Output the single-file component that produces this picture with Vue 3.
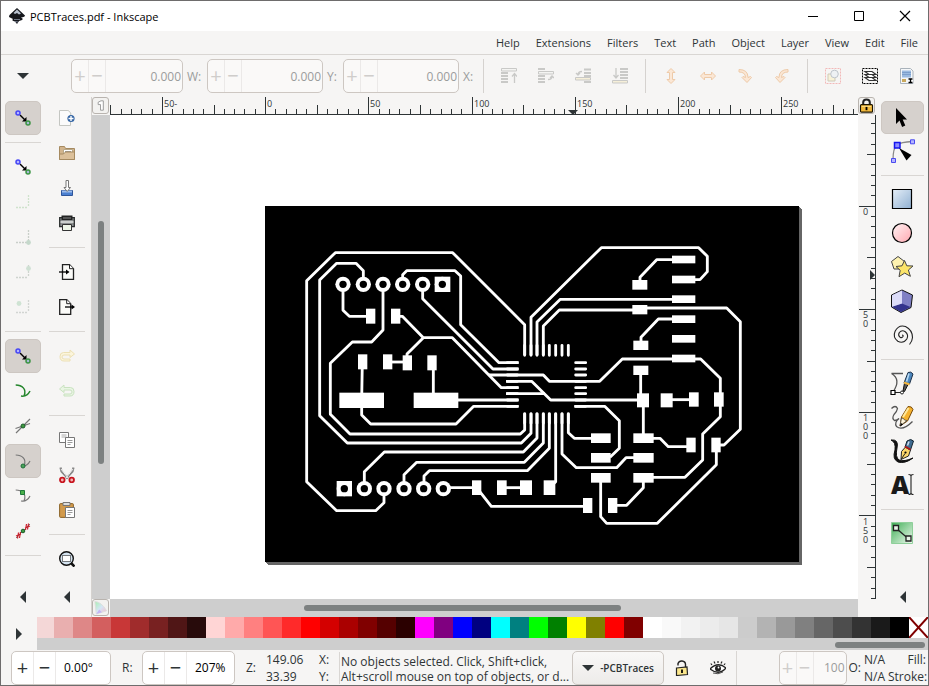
<template>
  <div class="window">
    <header class="titlebar">
      <svg class="logo" viewBox="0 0 16 16" v-html="icons.logo" />
      <h1 class="titlebar__text">PCBTraces.pdf - Inkscape</h1>
      <div class="titlebar__buttons">
        <button v-for="b in windowButtons" :key="b.name" class="win-btn" :aria-label="b.name">
          <svg viewBox="0 0 12 12" v-html="b.svg" />
        </button>
      </div>
    </header>

    <nav class="menubar">
      <button v-for="m in menus" :key="m" class="menubar__item">{{ m }}</button>
    </nav>

    <!-- Tool options -->
    <div class="options">
      <button class="options__more" aria-label="More"><svg class="icon" viewBox="0 0 16 16"><path d="M2 5h12l-6 6z" fill="#2e3436" /></svg></button>
      <template v-for="f in fields" :key="f.id">
        <div class="spin spin--off" :class="'spin--' + f.id">
          <button class="spin__btn" disabled aria-label="Increase">+</button>
          <button class="spin__btn" disabled aria-label="Decrease">−</button>
          <input :id="f.id" class="spin__input" :value="f.value" disabled />
        </div>
        <label class="options__label" :for="f.id">{{ f.label }}</label>
      </template>
      <template v-for="(group, g) in optionIcons" :key="g">
        <span class="vsep" />
        <button v-for="name in group" :key="name" class="opt-btn" :aria-label="name">
          <svg class="icon" viewBox="0 0 16 16" v-html="icons[name]" />
        </button>
      </template>
    </div>

    <main class="body">
      <div v-for="(bar, b) in leftBars" :key="b" class="bar">
        <template v-for="(item, i) in bar" :key="i">
          <hr v-if="item === '-'" class="hsep" />
          <button v-else class="bar__btn" :class="{ 'is-on': item.on }" :aria-label="item.icon">
            <svg class="icon" viewBox="0 0 16 16" v-html="icons[item.icon]" />
          </button>
        </template>
        <button class="bar__more" aria-label="More"><svg class="icon" viewBox="0 0 16 16"><path d="M11 2v12L5 8z" fill="#2e3436" /></svg></button>
      </div>

      <section class="desk">
        <button class="corner" aria-label="Guides"><svg viewBox="0 0 16 16" v-html="icons.guide" /></button>
        <svg class="ruler-h">
          <path d="M0 17.5H4000" class="ruler-line" />
          <path :d="hTicks" class="ruler-line" />
          <text v-for="l in hLabels" :key="l.text" :x="l.x" y="10" class="ruler-text">{{ l.text }}</text>
          <path d="M458 13h10l-5 5z" fill="#2e3436" />
        </svg>
        <button class="corner" aria-label="Lock guides"><svg viewBox="0 0 16 16" v-html="icons.lock" /></button>

        <div class="scroll-v"><span class="thumb" /></div>
        <div class="canvas">
          <svg class="page" viewBox="15 18 1602 1068">
            <g fill="none" stroke="#fff" stroke-width="8.500" stroke-linejoin="round">
              <path v-for="(t, i) in traces" :key="i" :d="t" />
              <path :d="chipPins" stroke-linecap="round" />
            </g>
            <rect v-for="(p, i) in pads" :key="i" :x="p[0]" :y="p[1]" :width="p[2]" :height="p[3]" fill="#fff" />
            <g v-for="(h, i) in holes" :key="'h' + i">
              <circle :cx="h[0]" :cy="h[1]" r="23" fill="#fff" />
              <circle :cx="h[0]" :cy="h[1]" r="11" />
            </g>
          </svg>
        </div>
        <svg class="ruler-v">
          <path d="M17.5 0V484" class="ruler-line" />
          <path :d="vTicks" class="ruler-line" />
          <text v-for="l in vLabels" :key="l.y" x="5" :y="l.y" class="ruler-text">{{ l.text }}</text>
          <path d="M12 155v10l5-5z" fill="#2e3436" />
        </svg>

        <button class="corner" aria-label="Color management"><svg viewBox="0 0 16 16" v-html="icons.cms" /></button>
        <div class="scroll-h"><span class="thumb" /></div>
        <span />
      </section>

      <div class="bar bar--tools">
        <template v-for="(item, i) in tools" :key="i">
          <hr v-if="item === '-'" class="hsep" />
          <button v-else class="bar__btn" :class="{ 'is-on': item === 'select' }" :aria-label="item">
            <svg class="icon-lg" viewBox="1 1 24 24" v-html="icons[item]" />
          </button>
        </template>
        <button class="bar__more" aria-label="More"><svg class="icon" viewBox="0 0 16 16"><path d="M11 2v12L5 8z" fill="#2e3436" /></svg></button>
      </div>
    </main>

    <div class="palette">
      <button class="palette__menu" aria-label="Palette"><svg class="icon" viewBox="0 0 16 16"><path d="M5 2v12l6-6z" fill="#2e3436" /></svg></button>
      <div class="palette__main">
        <div class="swatches">
          <button v-for="(c, i) in colors" :key="i" class="swatch" :aria-label="c" :style="{ background: c }" />
          <button class="swatch swatch--none" aria-label="None">
            <svg viewBox="0 0 19 21"><path d="M0 0L19 21M19 0L0 21" stroke="#800000" stroke-width="2" /></svg>
          </button>
        </div>
        <div class="scroll-p"><span class="thumb" /></div>
      </div>
    </div>

    <footer class="status">
      <div class="spin spin--rot">
        <button class="spin__btn" aria-label="Increase">+</button>
        <button class="spin__btn" aria-label="Decrease">−</button>
        <input id="rotation" class="spin__input" value="0.00°" />
      </div>
      <label class="status__label" for="rotation">R:</label>
      <div class="spin spin--zoom">
        <button class="spin__btn" aria-label="Increase">+</button>
        <button class="spin__btn" aria-label="Decrease">−</button>
        <input id="zoom" class="spin__input" value="207%" />
      </div>
      <label class="status__label" for="zoom">Z:</label>
      <div class="coords">
        <span>149.06</span><span>X:</span>
        <span>33.39</span><span>Y:</span>
      </div>
      <p class="message">No objects selected. Click, Shift+click,<br />Alt+scroll mouse on top of objects, or d...</p>
      <button class="layer"><svg viewBox="0 0 12 12"><path d="M0 3h12L6 9z" fill="#2e3436" /></svg>-PCBTraces</button>
      <button class="status__icon" aria-label="Lock layer"><svg class="icon" viewBox="0 0 16 16" v-html="icons.unlock" /></button>
      <button class="status__icon" aria-label="Show layer"><svg class="icon" viewBox="0 0 16 16" v-html="icons.eye" /></button>
      <span class="status__sep" />
      <div class="spin spin--off spin--opacity">
        <button class="spin__btn" disabled aria-label="Increase">+</button>
        <button class="spin__btn" disabled aria-label="Decrease">−</button>
        <input id="opacity" class="spin__input" value="100" disabled />
      </div>
      <label class="opacity-label" for="opacity">O:</label>
      <div class="style-info">
        <span>N/A</span><span>Fill:</span>
        <span>N/A</span><span>Stroke:</span>
      </div>
    </footer>
  </div>
</template>

<script setup>
const menus = ['Help', 'Extensions', 'Filters', 'Text', 'Path', 'Object', 'Layer', 'View', 'Edit', 'File']

const windowButtons = [
  { name: 'Minimize', svg: '<path d="M1 6.500h10" stroke="#000"/>' },
  { name: 'Maximize', svg: '<path d="M1.500 1.500h9v9h-9z" fill="none" stroke="#000"/>' },
  { name: 'Close', svg: '<path d="M1 1l10 10M11 1L1 11" stroke="#000" stroke-width="1.200"/>' },
]

const fields = [
  { id: 'w', label: 'W:', value: '0.000' },
  { id: 'y', label: 'Y:', value: '0.000' },
  { id: 'x', label: 'X:', value: '0.000' },
]

const optionIcons = [
  ['toTop', 'raise', 'lower', 'toBottom'],
  ['flipV', 'flipH', 'rotR', 'rotL'],
  ['touch', 'layers', 'selectAll'],
]

const leftBars = [
  [
    { icon: 'snap', on: true }, '-',
    { icon: 'snap' }, { icon: 'bbox' }, { icon: 'bboxCorner' }, { icon: 'bboxEdge' }, { icon: 'bboxCenter' }, '-',
    { icon: 'snap', on: true }, { icon: 'path' }, { icon: 'cross' }, { icon: 'cusp', on: true }, { icon: 'smooth' }, { icon: 'mid' }, '-',
  ],
  [
    { icon: 'newDoc' }, { icon: 'open' }, { icon: 'save' }, { icon: 'print' }, '-',
    { icon: 'import' }, { icon: 'export' }, '-',
    { icon: 'redo' }, { icon: 'undo' }, '-',
    { icon: 'copy' }, { icon: 'cut' }, { icon: 'paste' }, '-',
    { icon: 'zoomSel' },
  ],
]

const tools = ['select', 'node', '-', 'rect', 'circle', 'star', 'box', 'spiral', '-', 'pen', 'pencil', 'callig', 'text', '-', 'gradient']

const colors = [
  '#f4d7d7', '#e9afaf', '#de8787', '#d35f5f', '#c83737', '#a02c2c', '#782121', '#501616', '#280b0b',
  '#ffd5d5', '#ffaaaa', '#ff8080', '#ff5555', '#ff2a2a', '#ff0000', '#d40000', '#aa0000', '#800000', '#550000', '#2b0000',
  '#ff00ff', '#800080', '#0000ff', '#000080', '#00ffff', '#008080', '#00ff00', '#008000', '#ffff00', '#808000', '#ff0000', '#800000',
  '#ffffff', '#f9f9f9', '#f2f2f2', '#ececec', '#e6e6e6', '#cccccc', '#b3b3b3', '#999999', '#808080', '#666666', '#4d4d4d', '#333333', '#1a1a1a', '#000000',
]

// Rulers: a tick every 5 units, a longer one every 25 and 50
const STEP = 10.32
const tickSize = i => (i % 10 === 0 ? 17 : i % 5 === 0 ? 9 : 5)

function ticks(origin, max, draw) {
  let d = ''
  for (let i = -40; i < 400; i++) {
    const p = Math.floor(origin + i * STEP) + 0.5
    if (p >= 0 && p < max) d += draw(p, tickSize(i))
  }
  return d
}

const hTicks = ticks(155.6, 4000, (p, s) => `M${p} 17V${17 - s}`)
const vTicks = ticks(91.2, 484, (p, s) => `M18 ${p}H${18 - s}`)

const hLabels = ['50-', '0', '50', '100', '150', '200', '250'].map((text, i) => ({ text, x: Math.floor(155.6 + (i - 1) * 103.2) + 2 }))
const vLabels = ['0', '50', '100', '150'].flatMap((n, i) =>
  n.split('').map((text, k) => ({ text, y: Math.round(91 + i * 103.2) + 9 + k * 9 })))

const traces = [
  'M372 880V908L347 932H230L140 845V242L226 158H578L794 374V466',
  'M310 240V212L288 190H230L179 240V647L262 729H784L813 700V640',
  'M369 253V390L335 426H277L211 490V643L270 702H781L794 690V640',
  'M428 240V224L440 212H585L602 228V374L717 488H776',
  'M488 253V296L699 507H776',
  'M249 253V331L268 349H330',
  'M406 349H427L490 413H577L724 563H776',
  'M490 413L441 462V488',
  'M382 486H441',
  'M307 485L305 600V645L332 672H588L641 619H776',
  'M520 500V600',
  'M594 600H776',
  'M687 525H850L868 544H1019L1087 477H1322L1381 535V650L1328 702V780L1275 832H1150',
  'M738 544H815L872 600H1150',
  'M738 581H855',
  'M813 466V352L1024 143H1316L1342 169V215L1320 239H1270',
  'M831 466V366L901 298H1270',
  'M850 466V378L898 330H1140',
  'M1140 324H1400L1441 365V688L1392 735H1370',
  'M831 640V714L790 756H373L313 815V866',
  'M850 640V729L793 787H470L432 824V866',
  'M868 640V745L802 812H508L492 828V866',
  'M887 640V845L870 862',
  'M906 640V762L949 803H1070L1098 773H1150',
  'M925 640V698L943 715H1020',
  'M943 619H1034L1078 662V745L1050 772',
  'M550 863H650L694 919H983',
  'M726 863H800',
  'M1060 916H1100L1150 863V832',
  'M1022 833V950L1040 970H1192L1369 794V735',
  'M1142 510V600',
  'M1150 600V715H1200L1225 740H1290',
  'M1220 599H1302',
  'M1140 254V232L1190 179H1270',
  'M1143 436V412L1195 357H1270',
]

const pinX = [794, 813, 831, 850, 868, 887, 906, 925]
const pinY = [488, 507, 525, 544, 563, 581, 600, 619]
const chipPins = pinX.map(x => `M${x} 436V466M${x} 641V670`).join('') +
  pinY.map(y => `M742 ${y}H772M947 ${y}H977`).join('')

const pads = [
  [318, 326, 28, 45], [393, 326, 28, 45], [294, 463, 28, 45], [369, 463, 28, 45], [428, 466, 28, 45], [502, 466, 28, 45],
  [238, 578, 134, 46], [461, 578, 134, 46],
  [636, 841, 28, 44], [711, 841, 29, 44], [780, 841, 36, 44], [851, 841, 35, 44], [969, 894, 28, 45], [1044, 894, 28, 45],
  ...[167, 227, 286, 346, 405, 464].map(y => [1236, y, 70, 23]),
  [1117, 240, 45, 29], [1117, 315, 45, 28], [1120, 422, 45, 28], [1120, 497, 45, 28],
  [1131, 580, 36, 42], [1202, 580, 36, 42], [1287, 577, 29, 43], [1362, 577, 29, 43],
  ...[700, 759, 819].flatMap(y => [[993, y, 59, 29], [1120, y, 61, 29]]),
  [1279, 713, 28, 44], [1354, 713, 28, 44],
  [524, 230, 47, 46], [230, 843, 46, 46],
]

const holes = [
  ...[249, 310, 369, 428, 488, 547].map(x => [x, 253]),
  ...[253, 313, 372, 432, 491, 550].map(x => [x, 866]),
]

const curve = 'M.7 2C7 2 12 6 9 13M6 13q6 1 9-5'
const dots = 'M1 13.500h12M13.500 1v12'
const page = '<path d="M3.500 .700h7l4 4v10.600h-11z" fill="#fbfbf8" stroke="#222" stroke-width="1.300"/><path d="M10.500 .700v4h4" fill="#fff" stroke="#222"/>'
const rows = x => `<path d="M${x} 5h7M${x} 8h7M${x} 11h7M${x} 14h7" stroke="#c9c9c7" stroke-width="2"/>`

const icons = {
  logo: '<path d="M8 0L16 7.500Q16 9 12 9.500L14 11Q13 12.500 10 13L8 16 6 13.500Q2 12.500 4 11L0 9Q0 7 1 6.500z" fill="#15171c"/><path d="M8 1.500L4.500 5 6 6l2-1 2 1.500 2-1z" fill="#b9c2d0"/><path d="M5 11.500h6M6 13.500l3 .5" stroke="#8a93a5" stroke-width=".8"/>',
  snap: '<path d="M5 5l5 5" stroke="#000" stroke-width="1.400"/><path d="M11.500 11.500V7l-4.500 4.500z"/><circle cx="3" cy="3" r="2" fill="#b5b5ff" stroke="#4646f5" stroke-width="1.500"/><circle cx="13" cy="13" r="2" fill="#a8b8d8" stroke="#3b9443" stroke-width="1.500"/>',
  bbox: `<path d="${dots}" fill="none" stroke="#cfe2cc" stroke-width="1.300" stroke-dasharray="2 1"/>`,
  bboxCorner: `<path d="${dots}" fill="none" stroke="#c9cfc9" stroke-width="1.300" stroke-dasharray="2 1"/><circle cx="13.500" cy="13.500" r="2.400" fill="#c5d8cb"/>`,
  bboxEdge: `<path d="${dots}" fill="none" stroke="#ced4ce" stroke-width="1.300" stroke-dasharray="2 1"/><circle cx="13.500" cy="4.500" r="2.400" fill="#cfe0d3"/>`,
  bboxCenter: `<path d="${dots}" fill="none" stroke="#d2d5d2" stroke-width="1.300" stroke-dasharray="2 1"/><circle cx="4" cy="4.500" r="2.400" fill="#cfe3d3"/>`,
  path: `<path d="${curve}" fill="none" stroke="#24852c" stroke-width="1.500"/>`,
  cross: '<path d="M1 15L15 1M.5 10.500L15 5.500" stroke="#777" stroke-width="1.200"/><circle cx="8" cy="8" r="2" fill="#3f9a3f" stroke="#1c5c2c"/>',
  cusp: `<path d="${curve}" fill="none" stroke="#777" stroke-width="1.200"/><circle cx="8" cy="13" r="2" fill="#4aa35a" stroke="#1f6f3a"/>`,
  smooth: `<path d="${curve}" fill="none" stroke="#777" stroke-width="1.200"/><path d="M5.500 2.500h4v4h-4z" fill="#4ab04a" stroke="#1f7a3a"/>`,
  mid: '<path d="M1 15L15 1" stroke="#777"/><path d="M3.500 9.500l-1 6M5.500 9l-1 6M1 13l5-2M11.500 1l-1 6M13.500 .500l-1 6M10 5l5-2" stroke="#c8202c" stroke-width="1.200"/><circle cx="8" cy="8" r="1.800" fill="#3f9a3f" stroke="#1c5c2c"/>',
  newDoc: '<path d="M.5 .5h9l2 2v13H.5z" fill="#fbfbfb" stroke="#c4c6c2"/><path d="M9 .5l3 3v3" fill="none" stroke="#d8dad6"/><circle cx="12" cy="8.500" r="3.600" fill="#3465a4"/><path d="M12 6v5M9.500 8.500h5" stroke="#fff" stroke-width="1.400"/>',
  open: '<path d="M.5 14.500V1.500h5l1 2h9v11z" fill="#d2b48c" stroke="#a68a60"/><path d="M4.500 4.500h9v5h-9z" fill="#fff" stroke="#b8a888"/><path d="M6 6.500h6" stroke="#999"/><path d="M.5 14.500V9h4l2-2h9v7.500z" fill="#dcc09a" stroke="#a68a60"/>',
  save: '<path d="M2.500 10.500h11v5h-11z" fill="#4a7fd0" stroke="#2f559a"/><path d="M3 10.500h10v2H3z" fill="#9dbdeb"/><path d="M7 .5h2.500v7h2L8.200 11.500 5 7.500h2z" fill="#fff" stroke="#777"/>',
  print: '<path d="M.700 2.700h14.600v9H.700z" fill="#8a8e8e" stroke="#2a2d2d" stroke-width="1.300"/><path d="M2.500 .500h11V5h-11z" fill="#222"/><path d="M4.500 3h7" stroke="#eee" stroke-dasharray="1 1"/><path d="M1.500 7h13" stroke="#e2e4e2" stroke-width="1.500"/><path d="M3.500 9.500h9v6h-9z" fill="#eef6e8" stroke="#333"/>',
  import: page + '<path d="M0 8h8" stroke="#000" stroke-width="1.300"/><path d="M7 5.500v5L10.500 8z"/>',
  export: '<path d="M.700 .700h7l4 4v10.600H.700z" fill="#fbfbf8" stroke="#222" stroke-width="1.300"/><path d="M7.700 .700v4h4" fill="#fff" stroke="#222"/><path d="M6 8h8" stroke="#000" stroke-width="1.300"/><path d="M12.500 5.500v5L16 8z"/>',
  redo: '<path d="M15.500 6L11 2v2.500H4.500Q1 4.500 1 8.500 1 13 5 13h6v-2H5Q3 11 3 9q0-2 2-2h6v2.500z" fill="#fbf5dc" stroke="#ece0b4"/>',
  undo: '<path d="M.5 6L5 2v2.500h6.500Q15 4.500 15 8.500 15 13 11 13H5v-2h6q2 0 2-2 0-2-2-2H5v2.500z" fill="#e9f5e3" stroke="#c9e2c0"/>',
  copy: '<path d="M.5 .5h9v10h-9z" fill="#fff" stroke="#777"/><path d="M2.500 3h5M2.500 5h5" stroke="#aaa"/><path d="M6.500 5.500h9v10h-9z" fill="#fff" stroke="#777"/><path d="M8.500 8.500h5M8.500 10.500h5M8.500 12.500h3" stroke="#999"/>',
  cut: '<path d="M1.500 .5l1 4 6.500 7M14.500 .5l-1 4L7 11.500" fill="none" stroke="#888" stroke-width="2.200"/><path d="M2 2l7 9M14 2l-7 9" stroke="#eee" stroke-width="1"/><circle cx="3.300" cy="13" r="2.300" fill="#f0b8b8" stroke="#c8141e" stroke-width="1.800"/><circle cx="12.700" cy="13" r="2.300" fill="#f0b8b8" stroke="#c8141e" stroke-width="1.800"/>',
  paste: '<rect x=".6" y="1.600" width="13.800" height="13.800" rx="1" fill="#d29a4c" stroke="#8c6428"/><path d="M4 .5h7v3H4z" fill="#ddd" stroke="#777"/><path d="M6.500 5.500h9v10h-9z" fill="#fff" stroke="#777"/><path d="M8.500 8.500h5M8.500 10.500h5M8.500 12.500h3" stroke="#999"/>',
  zoomSel: '<circle cx="7.500" cy="7.500" r="6.800" fill="#d4e3f0" stroke="#111" stroke-width="1.400"/><path d="M3.500 4.500h8v6h-8z" fill="#fff" stroke="#000" stroke-dasharray="1 1"/><path d="M12 12l3.500 3.500" stroke="#111" stroke-width="2.600"/>',
  toTop: rows(0) + '<path d="M.5 .5h15V3H.5z" fill="#f4f4f2" stroke="#c9c9c7"/><path d="M13.500 15V6M11 8.500l2.500-3 2.500 3" fill="none" stroke="#c9c9c7" stroke-width="1.300"/>',
  raise: rows(0) + '<path d="M0 1h7" stroke="#c9c9c7" stroke-width="2"/><path d="M.5 3.500h15v2.500H.5z" fill="#f4f4f2" stroke="#c9c9c7"/><path d="M10 11.500q4 0 4-3M12 10l2-2 2 2" fill="none" stroke="#c9c9c7" stroke-width="1.300"/>',
  lower: rows(9) + '<path d="M9 1.500h7" stroke="#c9c9c7" stroke-width="2"/><path d="M.5 9.500h15V12H.5z" fill="#f6efd9" stroke="#c9c9c7"/><path d="M7 3.500q-4 0-4 3M1 5l2 2 2-2" fill="none" stroke="#c9c9c7" stroke-width="1.300"/>',
  toBottom: '<path d="M8 1h8M8 4h8M8 7h8M8 10h8" stroke="#c9c9c7" stroke-width="2"/><path d="M.5 12.500h15V15H.5z" fill="#f6efd9" stroke="#c9c9c7"/><path d="M4 0v9M1.500 7L4 10l2.500-3" fill="none" stroke="#c9c9c7" stroke-width="1.300"/>',
  flipV: '<path d="M8 .5l4 4H9.500v7H12l-4 4-4-4h2.500v-7H4z" fill="#fbe7d5" stroke="#eecaa8"/>',
  flipH: '<path d="M.5 8l4-4v2.500h7V4l4 4-4 4V9.500h-7V12z" fill="#fbe7d5" stroke="#eecaa8"/>',
  rotR: '<path d="M2 1.500q9 0 9 8l2.500-1 1 1-4.500 5-5-5 1-1 2.500 1Q8.500 4 2 4z" fill="#fbe7d5" stroke="#eecaa8"/>',
  rotL: '<path d="M14 1.500q-9 0-9 8l-2.500-1-1 1 4.500 5 5-5-1-1-2.500 1Q7.500 4 14 4z" fill="#fbe7d5" stroke="#eecaa8"/>',
  touch: '<path d="M.5 .5h15v15H.5z" fill="none" stroke="#f2b8b8" stroke-dasharray="2 1"/><path d="M3 6h7v7H3z" fill="#f8f2d8" stroke="#cfcab8"/><circle cx="9.500" cy="6" r="3.800" fill="#eef1f4" stroke="#bfc5cc"/>',
  layers: '<path d="M.5 .5h15v15H.5z" fill="none" stroke="#000" stroke-dasharray="2 1"/><path d="M3 9.500h7l4 3H7zM3 6.500h7l4 3H7zM3 3.500h7l4 3H7z" fill="#fff" stroke="#333" stroke-width="1.200"/>',
  selectAll: '<path d="M1.500 .5h10l2.500 2.500v12.500H1.500z" fill="#f5f7f9" stroke="#a9b2ba"/><path d="M3 2.500h9v7H3z" fill="#9cbbe0"/><path d="M3 4.500h9M3 6.500h9" stroke="#7d9fcc"/><path d="M3 11h4v3H3z" fill="#c9a85c"/><path d="M9 10h5v5H9z" fill="#fff"/><path d="M9.500 11h4M9.500 14.500h4M11.500 11v4" stroke="#000" stroke-width="1.300"/>',
  guide: '<path d="M5.500 4.500l3-1.500h2.500v10h-3V7H5.500z" fill="#fff" stroke="#999"/>',
  lock: '<path d="M4.500 8V4.500q0-3 3.500-3t3.500 3V8" fill="none" stroke="#222" stroke-width="2.200"/><rect x="1.600" y="7" width="12.800" height="8" rx="1" fill="#f2b93c" stroke="#1c1400" stroke-width="1.200"/><path d="M3 9h10" stroke="#ffe08a"/><path d="M8 9.500v3.500" stroke="#000" stroke-width="2"/>',
  cms: '<defs><linearGradient id="cms" x1="0" y1="0" x2="1" y2="1"><stop offset="0" stop-color="#a8f0b0"/><stop offset=".5" stop-color="#d5e6f5"/><stop offset="1" stop-color="#f8b8c8"/></linearGradient></defs><path d="M2 1.500Q9 2 14.500 11.500L3.500 15z" fill="url(#cms)" stroke="#ddd"/><path d="M3.500 15l3-5 3 3z" fill="#c3b5f5"/>',
  unlock: '<path d="M4 5.500V3.500Q5 .8 8 1q3.500.5 3.500 3.500v3" fill="none" stroke="#222" stroke-width="1.400"/><path d="M2.500 8l10.500-1 .5 7.500-11 1z" fill="#fbe78c" stroke="#222" stroke-width="1.200"/><path d="M8 9.500v3.500" stroke="#000" stroke-width="1.800"/>',
  eye: '<path d="M0 9q8-8 16-1-7 8-16 1z" fill="#fff" stroke="#222" stroke-width="1.300"/><circle cx="8" cy="8.500" r="3" fill="#222"/><circle cx="8.500" cy="7.500" r=".9" fill="#fff"/><path d="M2 5L.8 3.500M5 3.500L4 1.500M8 3V1M11 3.500l1-2M14 5l1.200-1.500" stroke="#222" stroke-width="1.200"/><path d="M3 13q5 2 10-1" fill="none" stroke="#555"/>',
  select: '<path d="M6 3v16l3.500-3.500 2.600 6.500 3.200-1.500-2.600-6H17z"/>',
  node: '<path d="M3 21Q3 9 7 6T22 2.500" fill="none" stroke="#888" stroke-width="1.300"/><path d="M1.500 19.500h4v4h-4zM20.500 .8h4v4h-4z" fill="#b5b5ff" stroke="#4a4af0"/><path d="M4.500 3.500H10v5.500H4.500z" fill="#8c8cff" stroke="#1414f0" stroke-width="1.500"/><path d="M9 9l12.500 7-5 5.500z"/>',
  rect: '<defs><linearGradient id="gr" x1="0" y1="0" x2="1" y2="1"><stop offset="0" stop-color="#e6eff8"/><stop offset="1" stop-color="#8fb0d2"/></linearGradient></defs><path d="M2.500 2.500h19v19h-19z" fill="url(#gr)" stroke="#000" stroke-width="1.200"/>',
  circle: '<defs><linearGradient id="gc" x1="0" y1="0" x2="1" y2="1"><stop offset="0" stop-color="#fff4f5"/><stop offset="1" stop-color="#ffa8b0"/></linearGradient></defs><circle cx="12" cy="12" r="9.500" fill="url(#gc)" stroke="#000" stroke-width="1.200"/>',
  star: '<path d="M8 1.500l6.500 5-2.500 7.500H4L1.500 6.500z" fill="#fdf2b0" stroke="#444"/><path d="M14.500 5.500l2.300 5.300 6.200.2-4.600 4 2 6.300-5.700-3.200-5.700 3.600 1.200-6.400L6 11.500l6-.7z" fill="#fbe469" stroke="#444"/>',
  box: '<path d="M12 1l10.500 5-1.500 12.500L11 23.500 1.500 18V6z" fill="#8080c4" stroke="#111"/><path d="M12 14.500l8.500 3.500L11 23 2 17.800z" fill="#34348c"/><path d="M12 1.500v13L2 17.800V6.300z" fill="#dcdcf8"/>',
  spiral: '<path d="M12 12q1.500 0 1 1.500-1 1.800-3 .7-2.300-2-.7-4.700 2.500-3 6-.8 3.700 3 1.500 7.300-3.500 5-9 2.300-5.300-4-2.700-10Q8.500 1.500 15.500 3.500q7 3.500 7 11-.3 4-3 7" fill="none" stroke="#222" stroke-width="1.100"/>',
  pen: '<path d="M1.500 2.500q10 6 1.500 18.500M1.500 2.500H13" fill="none" stroke="#555" stroke-width="1.300"/><path d="M4 21.500h8" stroke="#222"/><path d="M1 19.500h4v4H1z" fill="#fff" stroke="#000" stroke-width="1.200"/><circle cx="12" cy="21.500" r="1.500" fill="#fff" stroke="#222"/><path d="M13 20l1.500-8 3.500 1.500-3.500 7z" fill="#555" stroke="#111"/><path d="M14 12L18 1.500q3-1.500 5 1.500L19.500 13z" fill="#4d87bd" stroke="#1c3048"/><path d="M19 2.500l-2.500 8" stroke="#b8daf4" stroke-width="1.600"/><path d="M14 11.500l5.500 2" stroke="#f2b640" stroke-width="2"/>',
  pencil: '<path d="M1.500 3.500q4-4 6 0-.5 3-3.500 6-2.500 4 .5 6 3 0 4.500-2-5 4-2.500 8 6 5 16-5" fill="none" stroke="#555" stroke-width="1.300"/><path d="M10 21l1.500-9L18 1.500q4-.5 5 3L17.500 16z" fill="#f5b22e" stroke="#7a4a08"/><path d="M18.500 3l-5.500 9" stroke="#ffe89a" stroke-width="2"/><path d="M10 21l1.500-8 2 .5 1 1.500 2.500.5z" fill="#fff4d8" stroke="#444" stroke-width=".8"/><path d="M10 21.500l1-3.500 2 1.500z"/>',
  callig: '<path d="M1 1q8-1 6 8-2 9 2 12 5 2 14-2-8 6-15 4-6-3-3-12 1-8-4-10z" fill="#111" stroke="#111"/><path d="M11 20.500l.5-8 4-4.500 5 3-2 6z" fill="#fbd56a" stroke="#222"/><path d="M11 20.500l4-6" stroke="#222"/><circle cx="15.500" cy="13.500" r="1.100"/><path d="M15 8l2-6q4-3 6.500 0L20.500 11z" fill="#3f6c92" stroke="#14242f"/><path d="M15 7.500l5.500 3" stroke="#b01818" stroke-width="1.800"/><path d="M19 2.500l-1.500 4" stroke="#cde" stroke-width="1.500"/>',
  text: '<text x="1" y="21" font-family="Open Sans, sans-serif" font-weight="800" font-size="25" fill="#1a1a1a">A</text><path d="M18.500 1.500q2.500 0 2.500 1.500v17q0 1.500-2.500 1.500M23.500 1.500q-2.500 0-2.500 1.500M23.500 21.500q-2.500 0-2.500-1.500" fill="none" stroke="#222" stroke-width="1.100"/>',
  gradient: '<defs><linearGradient id="gg" x1="0" y1="0" x2="1" y2="1"><stop offset="0" stop-color="#3fae55"/><stop offset="1" stop-color="#f0faf0"/></linearGradient></defs><path d="M1.500 1.500h21v21h-21z" fill="url(#gg)" stroke="#8fcf9a"/><path d="M7 8l10.500 9" stroke="#222" stroke-width="1.300"/><path d="M3.500 4.500h5v5h-5zM16 15h5v5h-5z" fill="#e8f5e8" stroke="#222" stroke-width="1.300"/>',
}
</script>

<style>
body { margin: 0; }
</style>

<style scoped>
.window {
  display: flex;
  flex-direction: column;
  min-height: 100vh;
  box-sizing: border-box;
  border: 1px solid #6e6c6c;
  background: #f6f5f4;
  color: #2e3436;
  font-family: "Open Sans", "Noto Sans", sans-serif;
  font-size: 12px;
}
.window * { box-sizing: border-box; }

button { padding: 0; border: 0; background: none; color: inherit; font: inherit; }
svg { display: block; }
.icon { width: 16px; height: 16px; }
.icon-lg { width: 24px; height: 24px; overflow: visible; }

/* Title */
.titlebar { display: flex; align-items: center; height: 30px; padding-left: 8px; background: #fff; color: #000; }
.logo { width: 16px; height: 16px; }
.titlebar__text { flex: 1; margin: 0 0 0 5px; font-size: 11px; font-weight: 400; }
.titlebar__buttons { display: flex; }
.win-btn { display: flex; align-items: center; justify-content: center; width: 46px; height: 30px; }
.win-btn svg { width: 12px; height: 12px; }

.menubar {
  display: flex;
  justify-content: flex-end;
  gap: 16px;
  height: 24px;
  padding-right: 10px;
  border-bottom: 1px solid #d9d6d3;
  font-size: 11px;
}

/* Tool options */
.options { display: flex; align-items: center; height: 42px; padding-left: 14px; color: #9a9c9c; }
.options__more { width: 16px; margin-right: 40px; }
.options__label { min-width: 12px; margin: 0 4px; }
.vsep { width: 1px; height: 34px; margin: 0 6px 0 7px; background: #d5d2cf; }
.options__label + .vsep { margin-left: 4px; }
.opt-btn { display: flex; align-items: center; justify-content: center; width: 37px; height: 34px; }

.spin {
  display: flex;
  flex: none;
  height: 34px;
  border: 1px solid #cdc7c2;
  border-radius: 5px;
  background: #fff;
  overflow: hidden;
}
.spin__btn { flex: none; width: 22px; border-right: 1px solid #ebe9e8; font-size: 20px; line-height: 30px; }
.spin__input { flex: 1; min-width: 0; padding: 0 0 0 8px; border: 0; background: none; color: #000; font: inherit; }
.spin--off { background: #faf9f8; }
.spin--off .spin__btn { width: 17px; color: #cfcdcb; }
.spin--off .spin__input { padding: 0 1px; text-align: right; color: #9a9c9c; }
.spin--w { width: 112px; }
.spin--w + .options__label { width: 16px; }
.spin--y, .spin--x { width: 116px; }
.spin--rot { width: 100px; }
.spin--zoom { width: 93px; }
.spin--opacity { width: 68px; margin-left: auto; }

/* Side bars */
.body { display: flex; flex: 1; min-height: 520px; }
.bar { display: flex; flex: none; flex-direction: column; gap: 1px; width: 44px; padding: 4px; }
.bar + .bar { width: 46px; }
.bar__btn {
  display: flex;
  align-items: center;
  justify-content: center;
  width: 36px;
  height: 34px;
  border: 1px solid transparent;
  border-radius: 5px;
}
.bar__btn.is-on { background: #d6d1cd; border-color: #cdc7c2; }
.bar__more { display: flex; justify-content: center; width: 36px; margin: auto 0 8px; }
.hsep { width: 36px; height: 1px; margin: 6px 0; border: 0; background: #d9d6d3; }
.bar.bar--tools { width: 52px; padding: 4px 4px 4px 5px; }
.bar--tools .bar__btn { width: 43px; height: 33px; }
.bar--tools .hsep, .bar--tools .bar__more { width: 43px; }

/* Rulers, canvas and scrollbars */
.desk {
  display: grid;
  flex: 1;
  min-width: 0;
  grid-template: 18px 1fr 18px / 18px minmax(0, 1fr) 18px;
  border-left: 1px solid #d5d2cf;
}
.corner { width: 17px; height: 17px; border: 1px solid #b9b4af; border-radius: 3px; background: #f3f2f0; }
.corner svg { width: 15px; height: 15px; }
.ruler-h { width: 100%; height: 18px; }
.ruler-v { width: 18px; height: 100%; }
.ruler-line { fill: none; stroke: #2e3436; }
.ruler-text { font-size: 9px; fill: #2e3436; }
.canvas { position: relative; overflow: hidden; background: #fff; }
.page {
  position: absolute;
  left: 155px;
  top: 91px;
  width: 534px;
  height: 356px;
  background: #000;
  box-shadow: 1px 1px #666, 2px 2px #666, 3px 3px #666;
}
.scroll-v { display: grid; grid-template-rows: 106fr 243fr 135fr; justify-items: center; background: #cecece; }
.scroll-v .thumb { grid-row: 2; width: 6px; }
.scroll-h { display: grid; grid-template-columns: 194fr 317fr 237fr; align-items: center; background: #cecece; }
.scroll-h .thumb, .scroll-p .thumb { grid-column: 2; height: 6px; }
.thumb { border-radius: 3px; background: #7d8181; }

/* Palette */
.palette { display: flex; height: 33px; }
.palette__menu { display: flex; align-items: center; justify-content: center; width: 36px; }
.palette__main { flex: 1; min-width: 0; background: #cecece; }
.swatches { display: flex; justify-content: flex-end; height: 21px; overflow: hidden; }
.swatch { flex: none; width: 19px; height: 21px; }
.swatch--none { background: #fff; }
.scroll-p { display: grid; grid-template-columns: 798fr 90fr 3fr; align-items: center; height: 12px; padding-top: 2px; }

/* Status bar */
.status { display: flex; align-items: center; height: 35px; padding: 0 2px 0 10px; }
.status__label { flex: none; width: 11px; margin: 0 9px 0 11px; }
.coords { display: grid; flex: none; grid-template-columns: 53px 20px; line-height: 17px; }
.message {
  flex: none;
  width: 233px;
  margin: 0;
  padding: 2px 0 0 1px;
  border-left: 1px solid #d9d6d3;
  line-height: 15px;
  white-space: nowrap;
}
.layer {
  display: flex;
  flex: none;
  align-items: center;
  justify-content: center;
  gap: 6px;
  width: 92px;
  height: 34px;
  border: 1px solid #cdc7c2;
  border-radius: 5px;
  background: linear-gradient(#f9f8f7, #edebe9);
  font-size: 10px;
  font-weight: 600;
}
.layer svg { width: 12px; height: 12px; }
.status__icon { display: flex; flex: none; justify-content: center; width: 36px; }
.status__sep { width: 1px; height: 34px; background: #d9d6d3; }
.opacity-label { margin: 0 3px 0 2px; }
.style-info { display: grid; flex: none; grid-template-columns: 24px 38px; line-height: 17px; }
.style-info span:nth-child(even) { text-align: right; }
</style>
